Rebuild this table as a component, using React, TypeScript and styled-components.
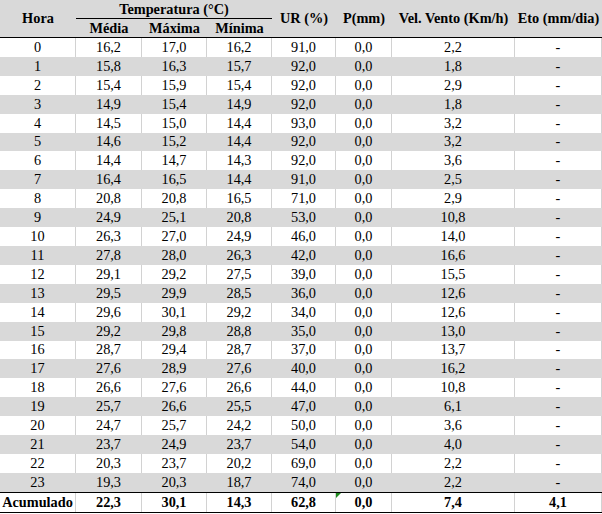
import React from "react";
import styled, { createGlobalStyle, css } from "styled-components";

const GlobalStyle = createGlobalStyle`
  html, body { margin: 0; padding: 0; background: #ffffff; }
  body { font-family: "Liberation Serif", "Times New Roman", serif; color: #000; }
`;

const COLS = "76px 66px 65px 65px 64px 56px 123px 87px";
const GRAY = "#d9d9d9";
const GRID = "#d2d2d2";

const Table = styled.div`
  width: 602px;
  display: flex;
  flex-direction: column;
  font-size: 14.3px;
`;

const Header = styled.div`
  display: grid;
  grid-template-columns: ${COLS};
  grid-template-rows: 19px 18px;
  background: ${GRAY};
  border-bottom: 1px solid #000;
  font-weight: bold;
`;

const HeadCell = styled.div<{ $col: string; $row: string; $underline?: boolean }>`
  grid-column: ${(p) => p.$col};
  grid-row: ${(p) => p.$row};
  display: flex;
  align-items: center;
  justify-content: center;
  white-space: nowrap;
  box-sizing: border-box;
  ${(p) =>
    p.$underline &&
    css`
      border-bottom: 1px solid #000;
    `}
`;

const Row = styled.div<{ $shade?: boolean; $total?: boolean }>`
  display: grid;
  grid-template-columns: ${COLS};
  height: ${(p) => (p.$total ? "21px" : "18.917px")};
  box-sizing: border-box;
  background: ${(p) => (p.$shade ? GRAY : "#ffffff")};
  ${(p) =>
    p.$total &&
    css`
      border-top: 1px solid #000;
      border-bottom: 1px solid #000;
      font-weight: bold;
    `}
`;

const Cell = styled.div<{ $shade?: boolean }>`
  position: relative;
  display: flex;
  align-items: center;
  justify-content: center;
  white-space: nowrap;
  box-sizing: border-box;
  border-right: 1px solid ${(p) => (p.$shade ? GRAY : GRID)};
`;

const Flag = styled.span`
  position: absolute;
  top: 0;
  left: 0;
  width: 0;
  height: 0;
  border-top: 5px solid #1e8a1e;
  border-right: 5px solid transparent;
`;

const rows: string[][] = [
  ["0", "16,2", "17,0", "16,2", "91,0", "0,0", "2,2", "-"],
  ["1", "15,8", "16,3", "15,7", "92,0", "0,0", "1,8", "-"],
  ["2", "15,4", "15,9", "15,4", "92,0", "0,0", "2,9", "-"],
  ["3", "14,9", "15,4", "14,9", "92,0", "0,0", "1,8", "-"],
  ["4", "14,5", "15,0", "14,4", "93,0", "0,0", "3,2", "-"],
  ["5", "14,6", "15,2", "14,4", "92,0", "0,0", "3,2", "-"],
  ["6", "14,4", "14,7", "14,3", "92,0", "0,0", "3,6", "-"],
  ["7", "16,4", "16,5", "14,4", "91,0", "0,0", "2,5", "-"],
  ["8", "20,8", "20,8", "16,5", "71,0", "0,0", "2,9", "-"],
  ["9", "24,9", "25,1", "20,8", "53,0", "0,0", "10,8", "-"],
  ["10", "26,3", "27,0", "24,9", "46,0", "0,0", "14,0", "-"],
  ["11", "27,8", "28,0", "26,3", "42,0", "0,0", "16,6", "-"],
  ["12", "29,1", "29,2", "27,5", "39,0", "0,0", "15,5", "-"],
  ["13", "29,5", "29,9", "28,5", "36,0", "0,0", "12,6", "-"],
  ["14", "29,6", "30,1", "29,2", "34,0", "0,0", "12,6", "-"],
  ["15", "29,2", "29,8", "28,8", "35,0", "0,0", "13,0", "-"],
  ["16", "28,7", "29,4", "28,7", "37,0", "0,0", "13,7", "-"],
  ["17", "27,6", "28,9", "27,6", "40,0", "0,0", "16,2", "-"],
  ["18", "26,6", "27,6", "26,6", "44,0", "0,0", "10,8", "-"],
  ["19", "25,7", "26,6", "25,5", "47,0", "0,0", "6,1", "-"],
  ["20", "24,7", "25,7", "24,2", "50,0", "0,0", "3,6", "-"],
  ["21", "23,7", "24,9", "23,7", "54,0", "0,0", "4,0", "-"],
  ["22", "20,3", "23,7", "20,2", "69,0", "0,0", "2,2", "-"],
  ["23", "19,3", "20,3", "18,7", "74,0", "0,0", "2,2", "-"],
];

const total = ["Acumulado", "22,3", "30,1", "14,3", "62,8", "0,0", "7,4", "4,1"];

export default function App() {
  return (
    <>
      <GlobalStyle />
      <Table>
        <Header>
          <HeadCell $col="1" $row="1 / 3">Hora</HeadCell>
          <HeadCell $col="2 / 5" $row="1" $underline>
            Temperatura (°C)
          </HeadCell>
          <HeadCell $col="5" $row="1 / 3">UR (%)</HeadCell>
          <HeadCell $col="6" $row="1 / 3">P(mm)</HeadCell>
          <HeadCell $col="7" $row="1 / 3">Vel. Vento (Km/h)</HeadCell>
          <HeadCell $col="8" $row="1 / 3">Eto (mm/dia)</HeadCell>
          <HeadCell $col="2" $row="2">Média</HeadCell>
          <HeadCell $col="3" $row="2">Máxima</HeadCell>
          <HeadCell $col="4" $row="2">Mínima</HeadCell>
        </Header>
        {rows.map((r, i) => {
          const shade = i % 2 === 1;
          return (
            <Row key={r[0]} $shade={shade}>
              {r.map((v, j) => (
                <Cell key={j} $shade={shade}>
                  {v}
                </Cell>
              ))}
            </Row>
          );
        })}
        <Row $total>
          {total.map((v, j) => (
            <Cell key={j}>
              {j === 5 && <Flag />}
              {v}
            </Cell>
          ))}
        </Row>
      </Table>
    </>
  );
}
